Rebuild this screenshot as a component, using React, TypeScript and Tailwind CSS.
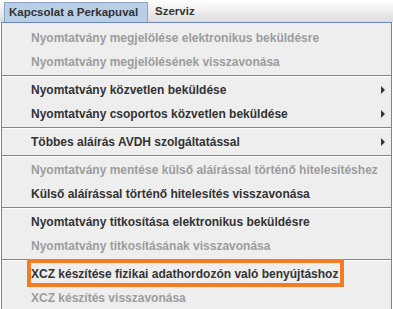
import React from "react";

type Row =
  | { kind: "item"; label: string; disabled?: boolean; submenu?: boolean; marked?: boolean }
  | { kind: "sep" };

const rows: Row[] = [
  { kind: "item", label: "Nyomtatvány megjelölése elektronikus beküldésre", disabled: true },
  { kind: "item", label: "Nyomtatvány megjelölésének visszavonása", disabled: true },
  { kind: "sep" },
  { kind: "item", label: "Nyomtatvány közvetlen beküldése", submenu: true },
  { kind: "item", label: "Nyomtatvány csoportos közvetlen beküldése", submenu: true },
  { kind: "sep" },
  { kind: "item", label: "Többes aláírás AVDH szolgáltatással", submenu: true },
  { kind: "sep" },
  { kind: "item", label: "Nyomtatvány mentése külső aláírással történő hitelesítéshez", disabled: true },
  { kind: "item", label: "Külső aláírással történő hitelesítés visszavonása" },
  { kind: "sep" },
  { kind: "item", label: "Nyomtatvány titkosítása elektronikus beküldésre" },
  { kind: "item", label: "Nyomtatvány titkosításának visszavonása", disabled: true },
  { kind: "sep" },
  { kind: "item", label: "XCZ készítése fizikai adathordozón való benyújtáshoz", marked: true },
  { kind: "item", label: "XCZ készítés visszavonása", disabled: true },
];

function Arrow() {
  return (
    <svg width="4" height="8" viewBox="0 0 4 8" className="ml-auto mr-[6px] shrink-0">
      <path d="M0 0 L4 4 L0 8 Z" fill="#333333" />
    </svg>
  );
}

export default function App() {
  return (
    <div className="w-[393px] h-[309px] overflow-hidden bg-white font-['Liberation_Sans',Arial,sans-serif] text-[12px] font-bold">
      {/* menüsor */}
      <div className="h-[22px] flex bg-gradient-to-b from-white to-[#dcdcdc] text-[11.5px]">
        <div className="ml-[4px] mt-[2px] h-[20px] w-[144px] pl-[4px] flex items-center bg-[#b8cfe5] border border-b-0 border-[#8ea3c4] text-[#333333]">
          Kapcsolat a Perkapuval
        </div>
        <div className="mt-[2px] h-[20px] pl-[7px] flex items-center text-[#333333]">Szerviz</div>
      </div>

      {/* lenyíló menü */}
      <div className="ml-[1px] w-[391px] border border-b-0 border-[#6b85c2] bg-[#eeeeee] pt-[3px]">
        {rows.map((r, i) =>
          r.kind === "sep" ? (
            <div key={i} className="h-[4px] pt-[1px]">
              <div className="h-[1px] bg-[#6b85c2]" />
              <div className="h-[1px] bg-white" />
            </div>
          ) : (
            <div
              key={i}
              className={`relative h-[24px] flex items-center pl-[29px] whitespace-nowrap ${
                r.disabled ? "text-[#9c9c9c]" : "text-[#333333]"
              }`}
            >
              {r.label}
              {r.submenu && <Arrow />}
              {r.marked && (
                <div className="absolute left-[25px] top-[-3px] w-[317px] h-[28px] border-4 border-[#f47b20]" />
              )}
            </div>
          )
        )}
      </div>
    </div>
  );
}
